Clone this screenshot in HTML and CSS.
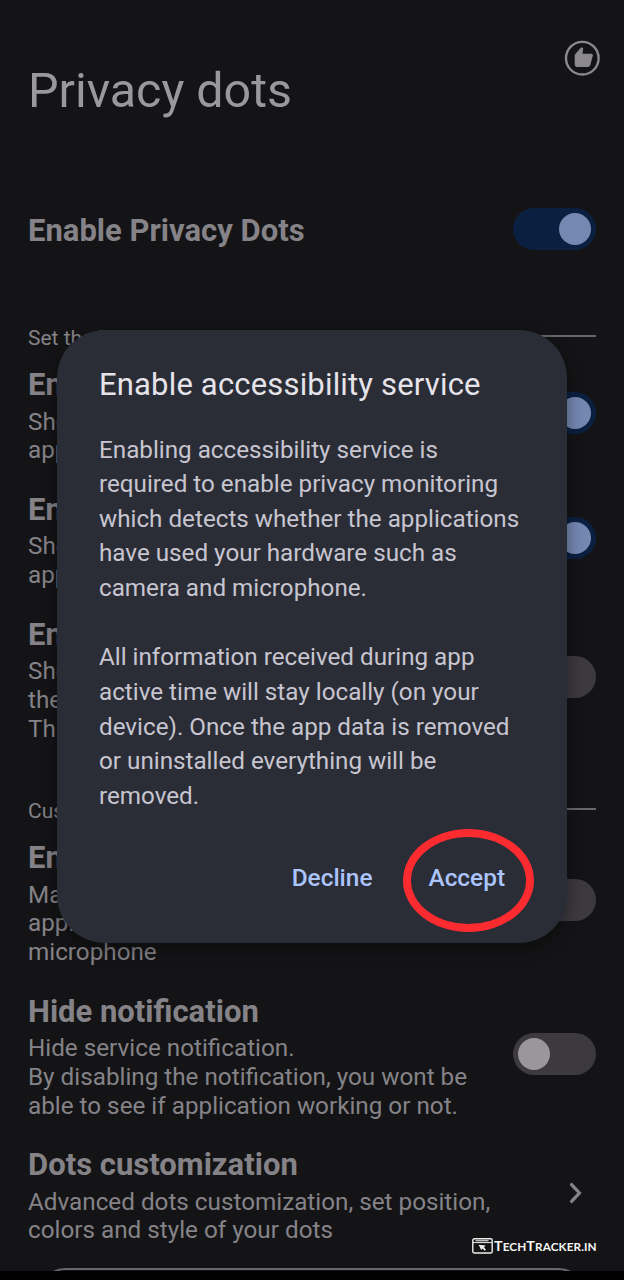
FILE: index.html
```html
<!DOCTYPE html>
<html lang="en">
<head>
<meta charset="utf-8">
<title>Privacy dots</title>
<link rel="stylesheet" href="styles.css">
</head>
<body>
<div class="screen">
  <main class="page">
    <header class="header">
      <h1 class="heading">Privacy dots</h1>
      <svg class="like" viewBox="0 0 36 36" width="36" height="36">
        <circle cx="18.3" cy="18.2" r="16.3" fill="none" stroke="currentColor" stroke-width="2.4"/>
        <path d="M10.7 14.8L17 7.6Q18.6 6.9 19.2 8.5L18.5 13.8H27.4Q29.2 14 28.8 15.8L26.2 25.2Q25.6 27 23.8 27H12.9Q10.7 26.8 10.7 24.8Z" fill="currentColor"/>
      </svg>
    </header>

    <div class="master">
      <span class="title">Enable Privacy Dots</span>
      <span class="switch on"><i class="knob"></i></span>
    </div>

    <div class="section"><span>Set the indicators</span><i class="rule"></i></div>

    <div class="item">
      <div class="text">
        <div class="title">Enable camera</div>
        <div class="desc">Shows dot when any<br>application uses camera</div>
      </div>
      <span class="switch on"><i class="knob"></i></span>
    </div>
    <div class="item">
      <div class="text">
        <div class="title">Enable microphone</div>
        <div class="desc">Shows dot when any<br>application uses mic</div>
      </div>
      <span class="switch on"><i class="knob"></i></span>
    </div>
    <div class="item">
      <div class="text">
        <div class="title">Enable location</div>
        <div class="desc">Shows dot when<br>the location is used.<br>This may use battery</div>
      </div>
      <span class="switch"><i class="knob"></i></span>
    </div>

    <div class="section second"><span>Customization</span><i class="rule"></i></div>

    <div class="item">
      <div class="text">
        <div class="title">Enable vibration</div>
        <div class="desc">Make vibration when<br>application uses camera or<br>microphone</div>
      </div>
      <span class="switch"><i class="knob"></i></span>
    </div>
    <div class="item">
      <div class="text">
        <div class="title">Hide notification</div>
        <div class="desc">Hide service notification.<br>By disabling the notification, you wont be<br>able to see if application working or not.</div>
      </div>
      <span class="switch"><i class="knob"></i></span>
    </div>
    <div class="item">
      <div class="text">
        <div class="title">Dots customization</div>
        <div class="desc">Advanced dots customization, set position,<br>colors and style of your dots</div>
      </div>
      <svg class="chevron" viewBox="0 0 14 22" width="14" height="22">
        <path d="M2.6 2.6L10.4 11L2.6 19.4" fill="none" stroke="currentColor" stroke-width="3.3" stroke-linecap="round"/>
      </svg>
    </div>
    <div class="card"></div>
  </main>
  <div class="navbar"></div>

  <section class="dialog">
    <h2 class="dialog-title">Enable accessibility service</h2>
    <p class="dialog-text">Enabling accessibility service is<br>required to enable privacy monitoring<br>which detects whether the applications<br>have used your hardware such as<br>camera and microphone.</p>
    <p class="dialog-text">All information received during app<br>active time will stay locally (on your<br>device). Once the app data is removed<br>or uninstalled everything will be<br>removed.</p>
    <div class="actions">
      <span>Decline</span>
      <span class="accept">Accept<i class="ring"></i></span>
    </div>
  </section>

  <div class="watermark">
    <svg viewBox="0 0 21 16" width="21" height="16">
      <rect x="0.8" y="0.8" width="19.4" height="14.2" rx="1.6" fill="none" stroke="#eee" stroke-width="1.4"/>
      <path d="M1 4.6H20" stroke="#eee" stroke-width="1"/>
      <path d="M3.5 2.7H16.5" stroke="#bbb" stroke-width="1.4"/>
      <path d="M6.6 6.8L13.6 7.4L12 9.2L14 11.8L12.5 12.8L10.7 10.6L9.2 12Z" fill="#eee"/>
    </svg>
    <span class="brand"><span class="cap">T</span>ECH<span class="cap">T</span>RACKER.IN</span>
  </div>
</div>
</body>
</html>
```
FILE: styles.css
```css
* { box-sizing: border-box; }
body { margin: 0; background: #141416; font-family: Roboto, sans-serif; }
h1, h2, p { margin: 0; font-weight: 400; }
i { font-style: normal; }

.screen {
  position: relative;
  width: 624px;
  height: 1280px;
  overflow: hidden;
  display: flex;
  flex-direction: column;
  background: #141416;
  color: #858388;
}
.page {
  height: 1271px;
  overflow: hidden;
  padding: 0 28px;
}
.header {
  display: flex;
  justify-content: space-between;
  align-items: flex-start;
  height: 192px;
  margin-right: -4px;
  padding-top: 40px;
}
.heading { padding-top: 22px; font-size: 48.4px; line-height: 58px; color: #99989a; }
.like { color: #8b898d; }

.master { display: flex; justify-content: space-between; align-items: center; height: 76px; }
.title { font-size: 31px; line-height: 37px; font-weight: 700; white-space: nowrap; }

.switch {
  flex: none;
  display: flex;
  width: 83px;
  height: 42px;
  padding: 5px;
  border-radius: 21px;
  background: #3d3a3f;
}
.switch.on { justify-content: flex-end; background: #0b2040; }
.knob { width: 32px; height: 32px; border-radius: 50%; background: #99979a; }
.on .knob { background: #7588b2; }
.master .switch { margin-bottom: 2px; }

.section {
  display: flex;
  align-items: center;
  gap: 12px;
  height: 26px;
  margin: 57px 0 15px;
  font-size: 21px;
  line-height: 26px;
}
.section.second { margin: 28.6px 0 15px; }
.rule { flex: 1; height: 2px; margin-bottom: 5px; background: #68676a; }
.second .rule { margin-bottom: 4px; }

.item { display: flex; justify-content: space-between; align-items: center; padding-bottom: 26px; }
.desc { margin-top: 4.5px; font-size: 24.25px; line-height: 28.7px; white-space: nowrap; }
.item .switch { margin-bottom: 5px; }
.chevron { margin: 0 13px 5px 0; }
.card { height: 60px; margin: -2.7px 8px 0; border: 2px solid #68676a; border-radius: 42px; }

.navbar { height: 9px; background: #000; }

.dialog {
  position: absolute;
  left: 57px;
  top: 330px;
  width: 510px;
  height: 613px;
  padding: 36px 42px 0;
  border-radius: 48px;
  background: #2b2d36;
  box-shadow: 0 6px 18px rgba(0, 0, 0, 0.4);
  white-space: nowrap;
}
.dialog-title { font-size: 31px; line-height: 37px; letter-spacing: 0.17px; color: #e6e4ea; }
.dialog-text { margin-top: 29.5px; font-size: 24.22px; line-height: 34.65px; color: #c7c5d0; }
.dialog-text + .dialog-text { margin-top: 34.65px; }
.actions {
  display: flex;
  justify-content: flex-end;
  gap: 56px;
  padding: 49.5px 20px 0 0;
  font-size: 24.4px;
  line-height: 30px;
  font-weight: 500;
  color: #acc4fc;
}
.accept { position: relative; }
.ring {
  position: absolute;
  left: -25.5px;
  top: -34px;
  width: 131px;
  height: 103px;
  border: 8.5px solid #fc2b30;
  border-radius: 50%;
}

.watermark {
  position: absolute;
  left: 472px;
  top: 1237px;
  display: flex;
  align-items: center;
  gap: 1px;
  font: 700 11.5px/17px Lato, sans-serif;
  color: #f4f4f4;
  white-space: nowrap;
}
.brand { letter-spacing: 0.1px; transform: scaleX(1.02); transform-origin: left; }
.cap { font-size: 14px; }
```
